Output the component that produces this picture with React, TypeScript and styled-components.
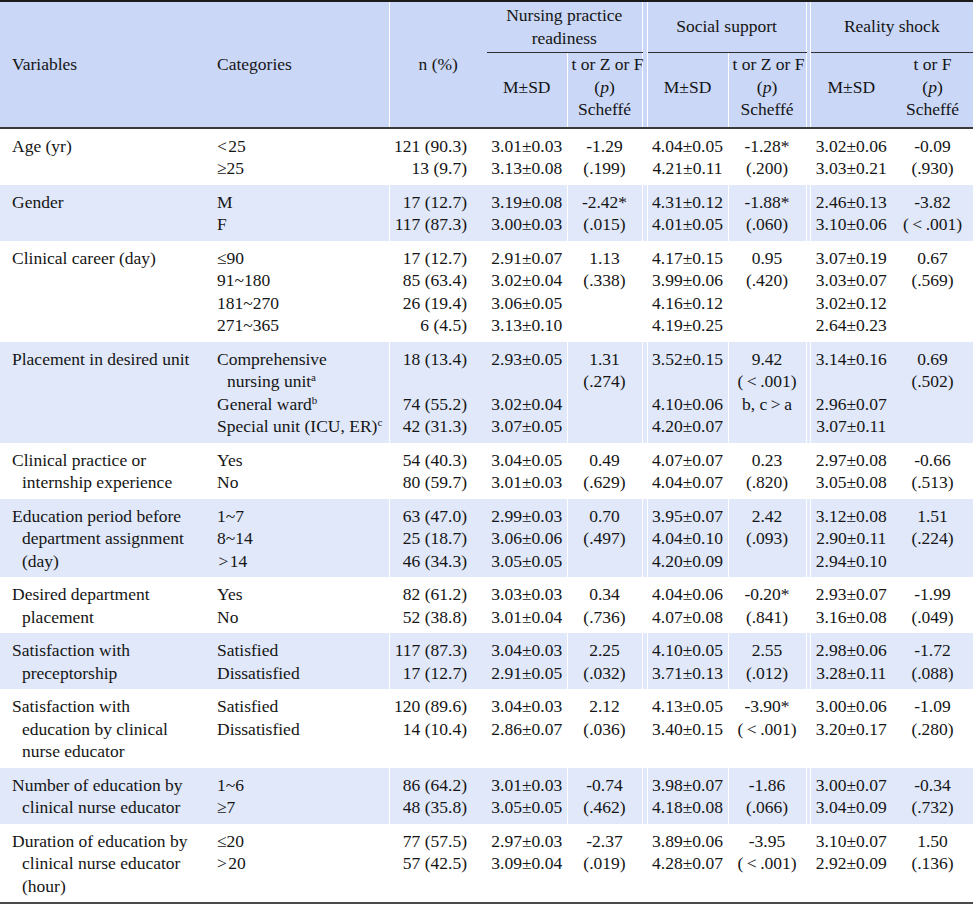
import React from "react";
import styled, { createGlobalStyle } from "styled-components";

const GlobalStyle = createGlobalStyle`
  html, body { margin: 0; padding: 0; background: #ffffff; }
`;

const HEAD_BG = "#cad7f7";
const SHADE_BG = "#e0e8fa";
const SEP = "#ffffff";

const Page = styled.div`
  width: 973px;
`;

const Table = styled.table`
  width: 973px;
  border-collapse: collapse;
  table-layout: fixed;
  font-family: "Liberation Serif", "Times New Roman", serif;
  font-size: 17.5px;
  color: #151515;
  border-top: 2px solid #1b1b1b;
  border-bottom: 2px solid #4a4a4a;
`;

const Col = styled.col<{ $w: number }>`
  width: ${(p) => p.$w}px;
`;

const Thead = styled.thead`
  background: ${HEAD_BG};
  border-bottom: 2px solid #3a3a3a;
`;

type Align = "left" | "center" | "right";

const HeadCell = styled.th<{
  $align?: Align;
  $sep?: boolean;
  $underline?: boolean;
  $padL?: number;
  $row2?: boolean;
  $spacer?: boolean;
}>`
  font-weight: normal;
  text-align: ${(p) => p.$align || "center"};
  vertical-align: middle;
  padding: ${(p) => (p.$row2 ? "0 4px 6px" : "2px 4px 3px")};
  padding-left: ${(p) => (p.$padL !== undefined ? p.$padL : 4)}px;
  ${(p) => (p.$spacer ? "padding: 0;" : "")}
  border-right: ${(p) => (p.$sep || p.$spacer ? `1px solid ${SEP}` : "none")};
  border-left: ${(p) => (p.$spacer ? `1px solid ${SEP}` : "none")};
  border-bottom: ${(p) => (p.$underline ? "1px solid #2e2e2e" : "none")};
  white-space: nowrap;
  line-height: 22.5px;
`;

const BodyRow = styled.tr<{ $shade?: boolean }>`
  background: ${(p) => (p.$shade ? SHADE_BG : "#ffffff")};
`;

const Cell = styled.td<{
  $align?: Align;
  $sep?: boolean;
  $padL?: number;
  $padR?: number;
  $spacer?: boolean;
}>`
  vertical-align: top;
  text-align: ${(p) => p.$align || "center"};
  padding: 6px ${(p) => (p.$padR !== undefined ? p.$padR : 4)}px 5px
    ${(p) => (p.$padL !== undefined ? p.$padL : 4)}px;
  ${(p) => (p.$spacer ? "padding: 0;" : "")}
  border-right: ${(p) => (p.$sep || p.$spacer ? `1px solid ${SEP}` : "none")};
  border-left: ${(p) => (p.$spacer ? `1px solid ${SEP}` : "none")};
`;

const Line = styled.div<{ $indent?: boolean }>`
  height: 22.5px;
  line-height: 22.5px;
  white-space: nowrap;
  padding-left: ${(p) => (p.$indent ? 10 : 0)}px;
`;

const Sup = styled.sup`
  font-size: 11px;
  line-height: 0;
  vertical-align: 6px;
`;

const Ital = styled.i`
  font-style: italic;
`;

type L = React.ReactNode;

interface RowData {
  v: L[];
  c: L[];
  n: L[];
  a: L[];
  at: L[];
  b: L[];
  bt: L[];
  r: L[];
  rt: L[];
  shade?: boolean;
}

const HS = "\u200a";
const TS = "\u2009";
const LT001 = `(${TS}<${TS}.001)`;

const rows: RowData[] = [
  {
    v: ["Age (yr)"],
    c: [`<${HS}25`, "≥25"],
    n: ["121 (90.3)", "13 (9.7)"],
    a: ["3.01±0.03", "3.13±0.08"],
    at: ["-1.29", "(.199)"],
    b: ["4.04±0.05", "4.21±0.11"],
    bt: ["-1.28*", "(.200)"],
    r: ["3.02±0.06", "3.03±0.21"],
    rt: ["-0.09", "(.930)"],
  },
  {
    v: ["Gender"],
    c: ["M", "F"],
    n: ["17 (12.7)", "117 (87.3)"],
    a: ["3.19±0.08", "3.00±0.03"],
    at: ["-2.42*", "(.015)"],
    b: ["4.31±0.12", "4.01±0.05"],
    bt: ["-1.88*", "(.060)"],
    r: ["2.46±0.13", "3.10±0.06"],
    rt: ["-3.82", LT001],
    shade: true,
  },
  {
    v: ["Clinical career (day)"],
    c: ["≤90", "91~180", "181~270", "271~365"],
    n: ["17 (12.7)", "85 (63.4)", "26 (19.4)", "6 (4.5)"],
    a: ["2.91±0.07", "3.02±0.04", "3.06±0.05", "3.13±0.10"],
    at: ["1.13", "(.338)"],
    b: ["4.17±0.15", "3.99±0.06", "4.16±0.12", "4.19±0.25"],
    bt: ["0.95", "(.420)"],
    r: ["3.07±0.19", "3.03±0.07", "3.02±0.12", "2.64±0.23"],
    rt: ["0.67", "(.569)"],
  },
  {
    v: ["Placement in desired unit"],
    c: [
      "Comprehensive",
      "__indent__nursing unit|a",
      "General ward|b",
      "Special unit (ICU, ER)|c",
    ],
    n: ["18 (13.4)", "", "74 (55.2)", "42 (31.3)"],
    a: ["2.93±0.05", "", "3.02±0.04", "3.07±0.05"],
    at: ["1.31", "(.274)"],
    b: ["3.52±0.15", "", "4.10±0.06", "4.20±0.07"],
    bt: ["9.42", LT001, `b, c${TS}>${TS}a`],
    r: ["3.14±0.16", "", "2.96±0.07", "3.07±0.11"],
    rt: ["0.69", "(.502)"],
    shade: true,
  },
  {
    v: ["Clinical practice or", "internship experience"],
    c: ["Yes", "No"],
    n: ["54 (40.3)", "80 (59.7)"],
    a: ["3.04±0.05", "3.01±0.03"],
    at: ["0.49", "(.629)"],
    b: ["4.07±0.07", "4.04±0.07"],
    bt: ["0.23", "(.820)"],
    r: ["2.97±0.08", "3.05±0.08"],
    rt: ["-0.66", "(.513)"],
  },
  {
    v: ["Education period before", "department assignment", "(day)"],
    c: ["1~7", "8~14", `${HS}>${HS}14`],
    n: ["63 (47.0)", "25 (18.7)", "46 (34.3)"],
    a: ["2.99±0.03", "3.06±0.06", "3.05±0.05"],
    at: ["0.70", "(.497)"],
    b: ["3.95±0.07", "4.04±0.10", "4.20±0.09"],
    bt: ["2.42", "(.093)"],
    r: ["3.12±0.08", "2.90±0.11", "2.94±0.10"],
    rt: ["1.51", "(.224)"],
    shade: true,
  },
  {
    v: ["Desired department", "placement"],
    c: ["Yes", "No"],
    n: ["82 (61.2)", "52 (38.8)"],
    a: ["3.03±0.03", "3.01±0.04"],
    at: ["0.34", "(.736)"],
    b: ["4.04±0.06", "4.07±0.08"],
    bt: ["-0.20*", "(.841)"],
    r: ["2.93±0.07", "3.16±0.08"],
    rt: ["-1.99", "(.049)"],
  },
  {
    v: ["Satisfaction with", "preceptorship"],
    c: ["Satisfied", "Dissatisfied"],
    n: ["117 (87.3)", "17 (12.7)"],
    a: ["3.04±0.03", "2.91±0.05"],
    at: ["2.25", "(.032)"],
    b: ["4.10±0.05", "3.71±0.13"],
    bt: ["2.55", "(.012)"],
    r: ["2.98±0.06", "3.28±0.11"],
    rt: ["-1.72", "(.088)"],
    shade: true,
  },
  {
    v: ["Satisfaction with", "education by clinical", "nurse educator"],
    c: ["Satisfied", "Dissatisfied"],
    n: ["120 (89.6)", "14 (10.4)"],
    a: ["3.04±0.03", "2.86±0.07"],
    at: ["2.12", "(.036)"],
    b: ["4.13±0.05", "3.40±0.15"],
    bt: ["-3.90*", LT001],
    r: ["3.00±0.06", "3.20±0.17"],
    rt: ["-1.09", "(.280)"],
  },
  {
    v: ["Number of education by", "clinical nurse educator"],
    c: ["1~6", "≥7"],
    n: ["86 (64.2)", "48 (35.8)"],
    a: ["3.01±0.03", "3.05±0.05"],
    at: ["-0.74", "(.462)"],
    b: ["3.98±0.07", "4.18±0.08"],
    bt: ["-1.86", "(.066)"],
    r: ["3.00±0.07", "3.04±0.09"],
    rt: ["-0.34", "(.732)"],
    shade: true,
  },
  {
    v: ["Duration of education by", "clinical nurse educator", "(hour)"],
    c: ["≤20", `>${HS}20`],
    n: ["77 (57.5)", "57 (42.5)"],
    a: ["2.97±0.03", "3.09±0.04"],
    at: ["-2.37", "(.019)"],
    b: ["3.89±0.06", "4.28±0.07"],
    bt: ["-3.95", LT001],
    r: ["3.10±0.07", "2.92±0.09"],
    rt: ["1.50", "(.136)"],
  },
];

const colWidths = [213, 176, 98, 80, 75, 5, 81, 78, 4, 82, 81];

const renderLine = (item: L, i: number, hangIndent = false) => {
  if (typeof item === "string") {
    let text = item;
    let indent = hangIndent && i > 0;
    if (text.startsWith("__indent__")) {
      text = text.slice(10);
      indent = true;
    }
    const parts = text.split("|");
    return (
      <Line key={i} $indent={indent}>
        {parts[0] || "\u00a0"}
        {parts[1] ? <Sup>{parts[1]}</Sup> : null}
      </Line>
    );
  }
  return <Line key={i}>{item}</Line>;
};

const Lines: React.FC<{ items: L[]; hang?: boolean }> = ({ items, hang }) => (
  <>{items.map((it, i) => renderLine(it, i, hang))}</>
);

const StatHead: React.FC<{ label: string }> = ({ label }) => (
  <>
    <Line>{label}</Line>
    <Line>
      (<Ital>p</Ital>)
    </Line>
    <Line>Scheffé</Line>
  </>
);

export default function App() {
  return (
    <Page>
      <GlobalStyle />
      <Table>
        <colgroup>
          {colWidths.map((w, i) => (
            <Col key={i} $w={w} />
          ))}
        </colgroup>
        <Thead>
          <tr>
            <HeadCell rowSpan={2} $align="left" $padL={12}>
              Variables
            </HeadCell>
            <HeadCell rowSpan={2} $align="left" $sep>
              Categories
            </HeadCell>
            <HeadCell rowSpan={2}>n (%)</HeadCell>
            <HeadCell colSpan={2} $underline>
              <Line>Nursing practice</Line>
              <Line>readiness</Line>
            </HeadCell>
            <HeadCell rowSpan={2} $spacer />
            <HeadCell colSpan={2} $underline>
              Social support
            </HeadCell>
            <HeadCell rowSpan={2} $spacer />
            <HeadCell colSpan={2} $underline>
              Reality shock
            </HeadCell>
          </tr>
          <tr>
            <HeadCell $row2 $sep>
              M±SD
            </HeadCell>
            <HeadCell $row2>
              <StatHead label="t or Z or F" />
            </HeadCell>
            <HeadCell $row2 $sep>
              M±SD
            </HeadCell>
            <HeadCell $row2>
              <StatHead label="t or Z or F" />
            </HeadCell>
            <HeadCell $row2>M±SD</HeadCell>
            <HeadCell $row2>
              <StatHead label="t or F" />
            </HeadCell>
          </tr>
        </Thead>
        <tbody>
          {rows.map((r, idx) => (
            <BodyRow key={idx} $shade={r.shade}>
              <Cell $align="left" $padL={12}>
                <Lines items={r.v} hang />
              </Cell>
              <Cell $align="left" $sep>
                <Lines items={r.c} />
              </Cell>
              <Cell $align="right" $padR={20}>
                <Lines items={r.n} />
              </Cell>
              <Cell $sep>
                <Lines items={r.a} />
              </Cell>
              <Cell>
                <Lines items={r.at} />
              </Cell>
              <Cell $spacer />
              <Cell $sep>
                <Lines items={r.b} />
              </Cell>
              <Cell>
                <Lines items={r.bt} />
              </Cell>
              <Cell $spacer />
              <Cell>
                <Lines items={r.r} />
              </Cell>
              <Cell>
                <Lines items={r.rt} />
              </Cell>
            </BodyRow>
          ))}
        </tbody>
      </Table>
    </Page>
  );
}
